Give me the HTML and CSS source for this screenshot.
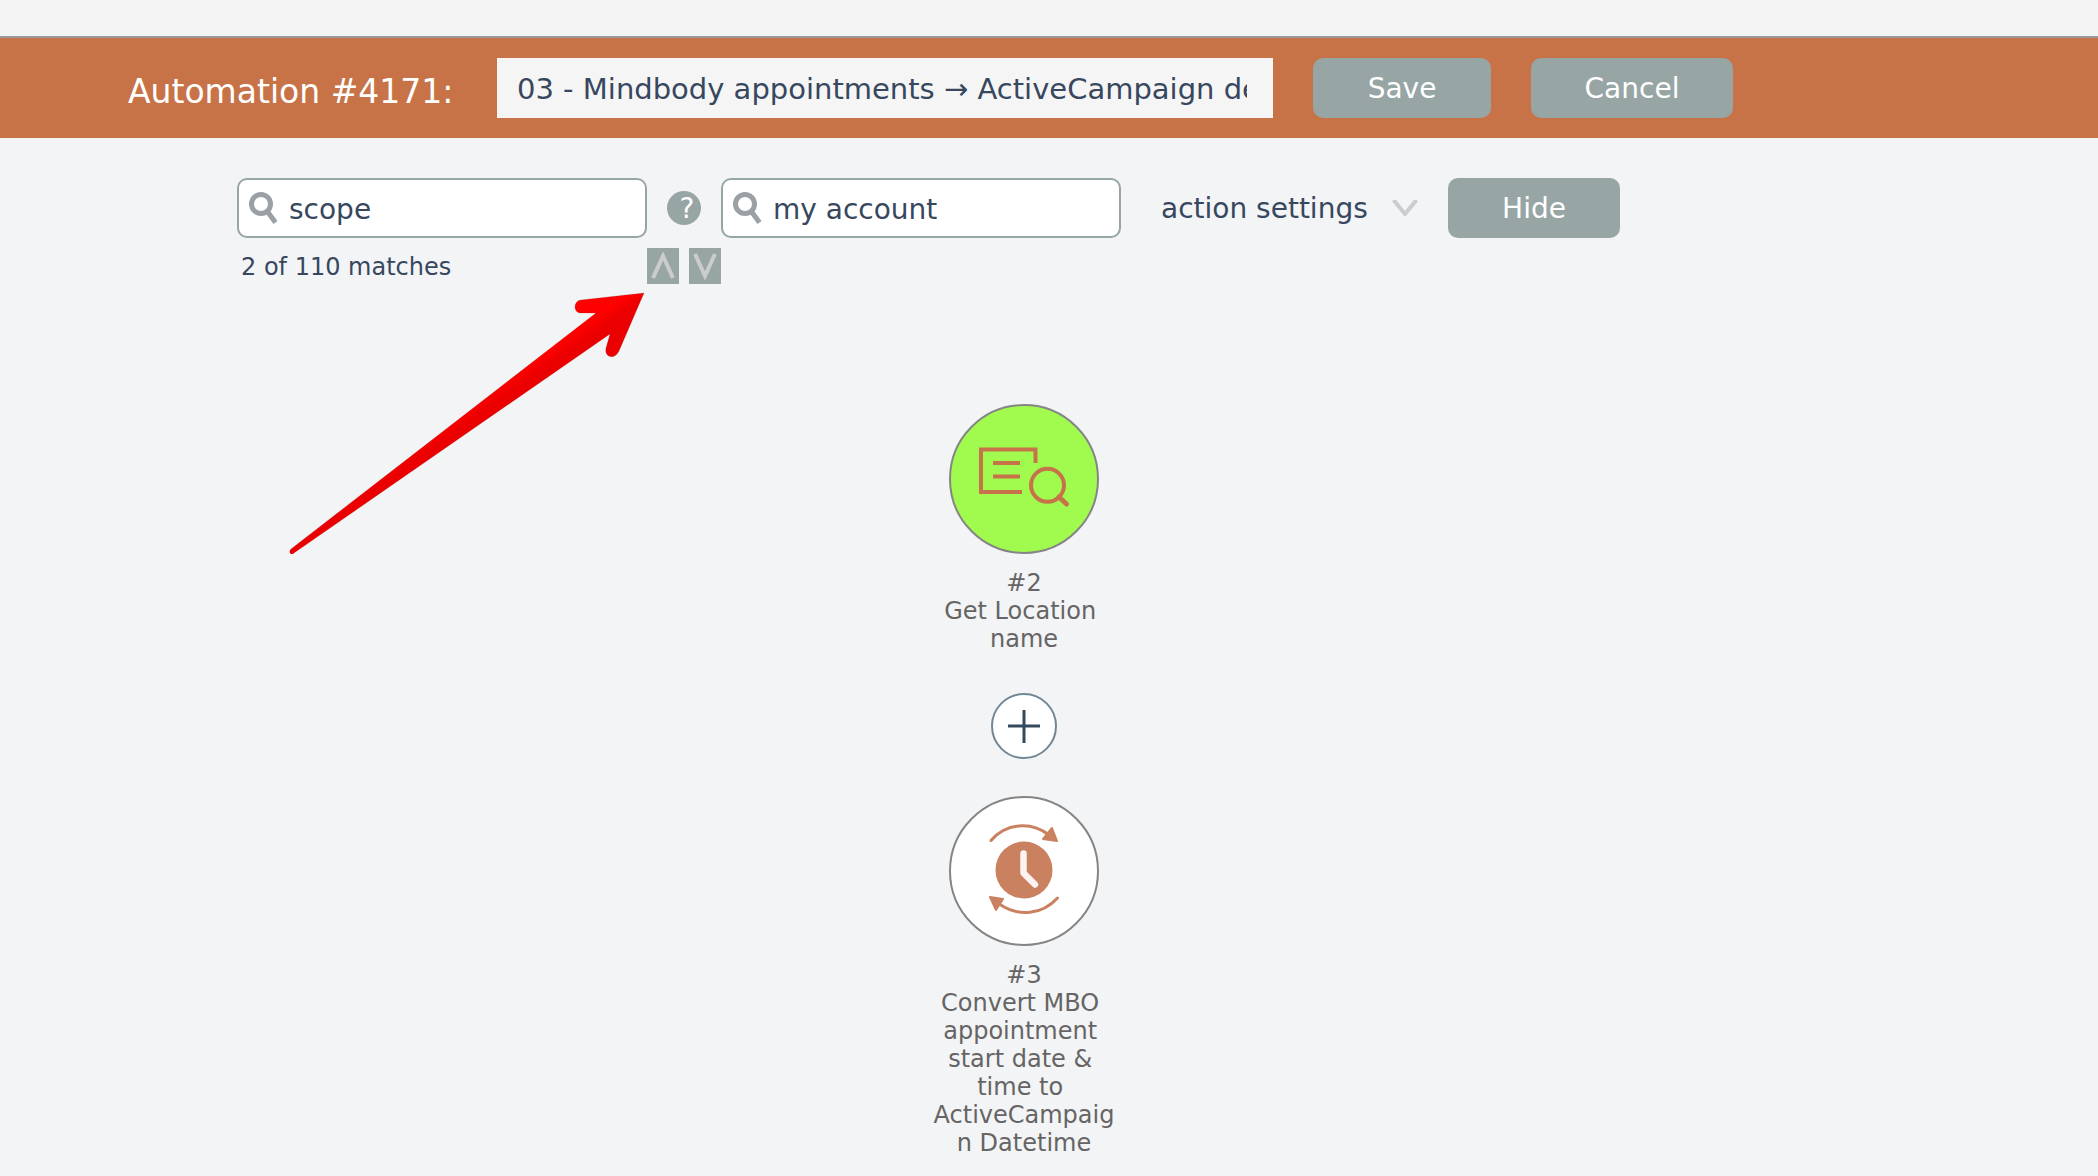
FILE: index.html
```html
<!DOCTYPE html>
<html lang="en">
<head>
<meta charset="utf-8">
<title>Automation #4171</title>
<link rel="stylesheet" href="styles.css">
</head>
<body>
<div class="top-strip"></div>
<header class="header">
  <label class="header-title" for="automation-name">Automation #4171:</label>
  <input class="name-input" id="automation-name" type="text" value="03 - Mindbody appointments → ActiveCampaign deal">
  <button class="button button-save" type="button">Save</button>
  <button class="button button-cancel" type="button">Cancel</button>
</header>

<main>
  <div class="toolbar">
    <div class="search search-scope">
      <svg class="search-icon" viewBox="0 0 30 32" aria-hidden="true"><circle cx="12" cy="12" r="9.5"/><path d="M18 19l8.500 11.500"/></svg>
      <input class="search-input" type="text" aria-label="Search text" value="scope">
    </div>
    <button class="help" type="button" aria-label="Help">?</button>
    <div class="search search-account">
      <svg class="search-icon" viewBox="0 0 30 32" aria-hidden="true"><circle cx="12" cy="12" r="9.5"/><path d="M18 19l8.500 11.500"/></svg>
      <input class="search-input" type="text" aria-label="Account" value="my account">
    </div>
    <div class="select-box">
      <select class="select" aria-label="Search in"><option>action settings</option></select>
      <svg class="select-chevron" viewBox="0 0 26 16" aria-hidden="true"><path d="M1.500 0l11.500 14L24.500 0"/></svg>
    </div>
    <button class="button button-hide" type="button">Hide</button>
  </div>

  <div class="matches">
    <span class="matches-count">2 of 110 matches</span>
    <button class="step" type="button" aria-label="Previous match"><svg viewBox="0 0 32 36"><path d="M6 30L16 8l10 22"/></svg></button>
    <button class="step" type="button" aria-label="Next match"><svg viewBox="0 0 32 36"><path d="M6 6l10 22L26 6"/></svg></button>
  </div>

  <section class="flow">
    <div class="node">
      <div class="node-circle node-circle-match">
        <svg viewBox="2 2 146 146" aria-hidden="true">
          <g fill="none" stroke="#c6734a" stroke-width="4">
            <path d="M73 88H32V45.500h54.500V59M44 59h27M44 72.500h27"/>
            <circle cx="98.500" cy="81.300" r="16.500"/>
            <path d="M110 93l7.500 7" stroke-width="5" stroke-linecap="round"/>
          </g>
        </svg>
      </div>
      <p class="node-label">#2
Get Location name</p>
    </div>
    <button class="add" type="button" aria-label="Add action"><svg viewBox="2 2 62 62"><path d="M33 17v33M17 33h32"/></svg></button>
    <div class="node">
      <div class="node-circle">
        <svg viewBox="2 2 146 146" aria-hidden="true">
          <circle cx="75" cy="74" r="28.500" fill="#ca8160"/>
          <path d="M74.500 57.500V77l11.500 11.500" fill="none" stroke="#fcf3f2" stroke-width="6.500" stroke-linecap="round" stroke-linejoin="round"/>
          <g fill="none" stroke="#ca8160" stroke-width="3" stroke-linecap="round">
            <path d="M42 44.500C57 27 82 25 100 39M108.500 102C93 119 70 121 51 108.500"/>
          </g>
          <g fill="#ca8160" stroke="#ca8160" stroke-width="2" stroke-linejoin="round">
            <path d="M103 32l5 13-14-2zM41 101l13 2-7 11z"/>
          </g>
        </svg>
      </div>
      <p class="node-label">#3
Convert MBO appointment start date &amp; time to ActiveCampaign Datetime</p>
    </div>
  </section>
</main>

<svg class="pointer" viewBox="0 0 360 264" aria-hidden="true">
  <defs>
    <linearGradient id="pointer-fill" gradientUnits="userSpaceOnUse" x1="257" y1="51" x2="274" y2="75">
      <stop offset="0.350" stop-color="#ff0000"/>
      <stop offset="0.750" stop-color="#ea0000"/>
    </linearGradient>
  </defs>
  <path fill="url(#pointer-fill)" stroke="#8a2a2a" stroke-opacity="0.400" stroke-width="0.500" d="M356 3L293 10C285 11 285 23 293 23H308L3 259C0 262 3 266 6 263L322 44L318 58C316 68 327 70 331 61Z"/>
</svg>
</body>
</html>
```
FILE: styles.css
```css
* {
  box-sizing: border-box;
}

body {
  position: relative;
  margin: 0;
  background: #f2f4f6;
  color: #37475e;
  font-family: Verdana, "DejaVu Sans", sans-serif;
  font-size: 28px;
}

button,
input,
select {
  margin: 0;
  border: 0;
  color: inherit;
  font: inherit;
}

.top-strip {
  height: 38px;
  background: #f4f4f4;
  border-bottom: 2px solid #999;
}

.header {
  display: flex;
  align-items: center;
  gap: 40px;
  height: 100px;
  padding: 0 128px;
  background: #c77347;
}

.header-title {
  flex: 0 0 329px;
  padding-top: 8px;
  color: #fff;
  font-size: 33px;
  line-height: 40px;
  white-space: nowrap;
}

.name-input {
  flex: 0 1 776px;
  min-width: 0;
  height: 60px;
  padding: 2px 26px 0 20px;
  background: #f5f5f5;
  font-size: 29px;
}

.button {
  flex: none;
  height: 60px;
  padding: 0;
  border-radius: 10px;
  background: #97a5a5;
  color: #fff;
}

.button-save {
  width: 178px;
}

.button-cancel {
  width: 202px;
}

.button-hide {
  width: 172px;
}

.toolbar {
  display: flex;
  align-items: center;
  padding: 40px 40px 0 237px;
}

.search {
  display: flex;
  align-items: center;
  gap: 10px;
  min-width: 0;
  height: 60px;
  padding: 0 8px 0 10px;
  border: 2px solid #97a5a5;
  border-radius: 10px;
  background: #fff;
}

.search-scope {
  flex: 0 1 410px;
}

.search-account {
  flex: 0 1 400px;
}

.search-icon {
  flex: none;
  width: 30px;
  height: 32px;
  fill: none;
  stroke: #9aa0a3;
  stroke-width: 5;
}

.search-input {
  flex: 1;
  min-width: 0;
  height: 56px;
  padding: 2px 0 0;
  background: none;
}

.help {
  flex: none;
  width: 34px;
  height: 34px;
  margin: 0 20px;
  padding: 2px 0 0 6px;
  border-radius: 50%;
  background: #97a5a5;
  color: #fff;
  line-height: 32px;
}

.select-box {
  display: flex;
  align-items: center;
  gap: 24px;
  margin: 0 30px 0 40px;
}

.select {
  height: 60px;
  padding: 0;
  appearance: none;
  background: none;
}

.select-chevron {
  width: 26px;
  height: 16px;
  fill: none;
  stroke: #ccc;
  stroke-width: 4;
}

.matches {
  display: flex;
  gap: 10px;
  padding: 10px 40px 0 241px;
  font-size: 24px;
  line-height: 38px;
}

.matches-count {
  width: 396px;
  height: 36px;
}

.step {
  width: 32px;
  height: 36px;
  padding: 0;
  background: #97a5a5;
}

.step svg {
  display: block;
  fill: none;
  stroke: #ccc;
  stroke-width: 4;
}

.flow {
  display: flex;
  flex-direction: column;
  align-items: center;
  padding: 120px 50px 18px 0;
}

.node {
  display: flex;
  flex-direction: column;
  align-items: center;
  gap: 15px;
}

.node-circle {
  width: 150px;
  height: 150px;
  border: 2px solid #858585;
  border-radius: 50%;
  background: #fff;
}

.node-circle svg {
  display: block;
}

.node-circle-match {
  background: #a1fb4e;
}

.node-label {
  width: 190px;
  margin: 0;
  color: #666464;
  font-size: 24px;
  line-height: 28px;
  text-align: center;
  white-space: break-spaces;
  overflow-wrap: anywhere;
}

.add {
  width: 66px;
  height: 66px;
  margin: 40px 0 37px;
  padding: 0;
  border: 2px solid #728796;
  border-radius: 50%;
  background: #fff;
}

.add svg {
  display: block;
  fill: none;
  stroke: #34495e;
  stroke-width: 3;
}

.pointer {
  position: absolute;
  top: 290px;
  left: 288px;
  width: 360px;
  height: 264px;
  pointer-events: none;
}
```
